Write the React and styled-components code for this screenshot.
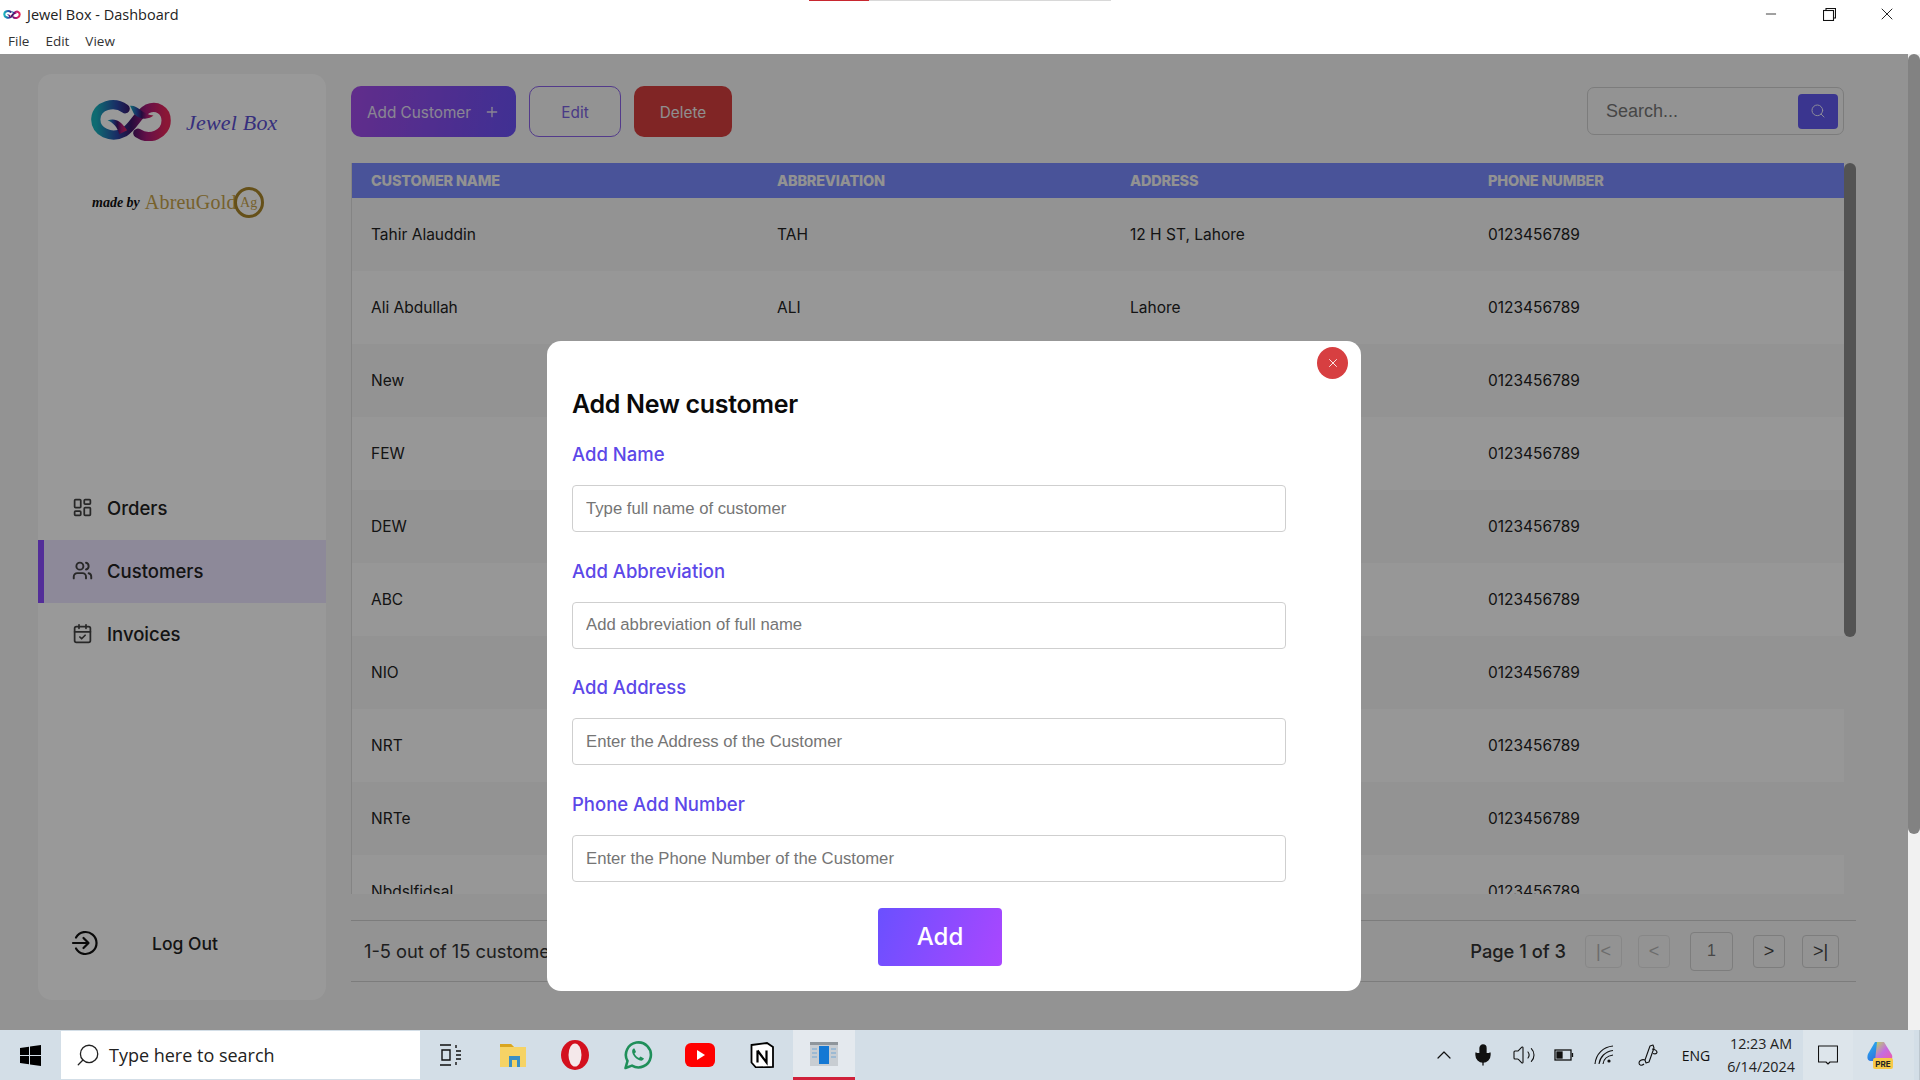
import React from "react";
import styled, { createGlobalStyle } from "styled-components";
import {
  LayoutDashboard,
  Users,
  CalendarCheck,
  Search,
  Plus,
  X,
  Minus,
  ChevronUp,
  Mic,
  Volume2,
} from "lucide-react";

const GlobalStyle = createGlobalStyle`
  html, body { margin: 0; padding: 0; height: 100%; overflow: hidden; }
  body { font-family: "Inter", "Liberation Sans", sans-serif; background: #f1f1f1; }
  * { box-sizing: border-box; }
`;

const Window = styled.div`
  width: 1920px;
  height: 1080px;
  display: flex;
  flex-direction: column;
  position: relative;
`;

/* title bar + menu */
const TitleArea = styled.div`
  height: 54px;
  background: #fff;
  position: relative;
  flex-shrink: 0;
`;

const LoadBar = styled.div`
  position: absolute;
  top: 0;
  left: 809px;
  width: 302px;
  height: 1px;
  background: linear-gradient(90deg, #c8272f 0 60px, #d8d8d8 60px);
`;

const TitleRow = styled.div`
  height: 28px;
  display: flex;
  align-items: center;
  padding-left: 3px;
  font-family: "Open Sans", sans-serif;
  font-size: 14.5px;
  color: #222;
`;

const TitleText = styled.span`
  margin-left: 6px;
`;

const WinButtons = styled.div`
  position: absolute;
  top: 0;
  right: 4px;
  display: flex;
`;

const WinButton = styled.div`
  width: 58px;
  height: 28px;
  display: flex;
  align-items: center;
  justify-content: center;
  color: #111;
`;

const MenuRow = styled.div`
  display: flex;
  gap: 16px;
  padding: 4px 0 0 8px;
  font-family: "Open Sans", sans-serif;
  font-size: 13.5px;
  color: #333;
`;

/* dashboard */
const Stage = styled.div`
  flex: 1;
  display: flex;
  position: relative;
  overflow: hidden;
`;

const Dashboard = styled.div`
  width: 1908px;
  background: #f5f5f5;
  display: flex;
  padding: 20px 0 30px 38px;
  gap: 25px;
`;

const Sidebar = styled.aside`
  width: 288px;
  background: #fff;
  border-radius: 14px;
  display: flex;
  flex-direction: column;
`;

const LogoBlock = styled.div`
  height: 403px;
  padding: 26px 0 0 52px;
`;

const LogoRow = styled.div`
  display: flex;
  align-items: center;
  gap: 14px;
`;

const BrandScript = styled.span`
  font-family: "Liberation Serif", serif;
  font-style: italic;
  font-size: 22px;
  letter-spacing: 0.2px;
  color: #5b4fd0;
  position: relative;
  top: 2px;
`;

const MadeByRow = styled.div`
  display: flex;
  align-items: center;
  gap: 5px;
  margin: 46px 0 0 2px;
`;

const MadeBy = styled.span`
  font-family: "Liberation Serif", serif;
  font-style: italic;
  font-size: 14px;
  font-weight: 700;
  color: #111;
`;

const GoldName = styled.span`
  font-family: "Liberation Serif", serif;
  font-size: 20px;
  color: #c6a24a;
  letter-spacing: 0.2px;
`;

const GoldRing = styled.span`
  width: 30px;
  height: 31px;
  margin-left: -8px;
  border-radius: 50%;
  border: 3px solid #a9852a;
  font-family: "Liberation Serif", serif;
  font-size: 14px;
  color: #c6a24a;
  display: flex;
  align-items: center;
  justify-content: center;
`;

const NavItem = styled.div`
  height: 63px;
  display: flex;
  align-items: center;
  gap: 14px;
  padding: 0 0 2px ${(props) => (props.$active ? "28px" : "34px")};
  font-size: 18.5px;
  font-weight: 500;
  color: #222;
  background: ${(props) => (props.$active ? "#ece4ff" : "transparent")};
  border-left: ${(props) => (props.$active ? "6px solid #8a4cff" : "none")};
  svg {
    color: #444;
  }
`;

const LogoutRow = styled.div`
  margin-top: auto;
  height: 114px;
  display: flex;
  align-items: center;
  gap: 53px;
  padding: 0 0 0 33px;
  font-size: 17.5px;
  font-weight: 500;
  color: #222;
`;

const Content = styled.main`
  width: 1506px;
  display: flex;
  flex-direction: column;
`;

const Toolbar = styled.div`
  height: 89px;
  display: flex;
  gap: 13px;
  padding-top: 12px;
  padding-right: 13px;
  align-items: flex-start;
`;

const ToolButton = styled.div`
  height: 51px;
  display: flex;
  align-items: center;
  justify-content: center;
  gap: 13px;
  width: ${(props) => props.$w}px;
  border-radius: 10px;
  font-size: 15.3px;
  padding-top: 1px;
  color: ${(props) => props.$color};
  background: ${(props) => props.$bg};
  border: ${(props) => props.$border || "none"};
`;

const SearchBox = styled.div`
  margin-left: auto;
  width: 257px;
  height: 48px;
  margin-top: 1px;
  border: 1px solid #cfcfcf;
  border-radius: 7px;
  display: flex;
  align-items: center;
  justify-content: space-between;
  padding: 0 5px 0 18px;
  font-family: "Liberation Sans", sans-serif;
  font-size: 18px;
  color: #757575;
`;

const SearchButton = styled.div`
  width: 40px;
  height: 35px;
  border-radius: 4px;
  background: #6259ef;
  color: #e8e8ff;
  display: flex;
  align-items: center;
  justify-content: center;
`;

const TableArea = styled.div`
  position: relative;
  height: 731px;
`;

const TableWrap = styled.div`
  position: relative;
  height: 731px;
  width: 1493px;
  overflow: hidden;
  border-left: 1px solid #dcdcdc;
`;

const TableHead = styled.div`
  height: 35px;
  background: #7a8aff;
  display: grid;
  grid-template-columns: 406px 353px 358px 1fr;
  align-items: center;
  padding-left: 19px;
  font-size: 14.5px;
  font-weight: 800;
  letter-spacing: -0.2px;
  color: #f3f3f3;
`;

const Row = styled.div`
  height: 73px;
  display: grid;
  grid-template-columns: 406px 353px 358px 1fr;
  align-items: center;
  padding-left: 19px;
  font-size: 15.5px;
  color: #222;
  background: ${(props) => (props.$odd ? "#f6f6f6" : "#fcfcfc")};
`;

const TableScroll = styled.div`
  position: absolute;
  left: 1493px;
  top: 0;
  width: 12px;
  height: 474px;
  border-radius: 6px;
  background: #8a8a8a;
`;

const Footer = styled.div`
  margin-top: 26px;
  width: 1505px;
  height: 62px;
  border-top: 1px solid #cfcfcf;
  border-bottom: 1px solid #cfcfcf;
  display: flex;
  align-items: center;
  justify-content: space-between;
  padding: 0 17px 0 13px;
  font-size: 18.3px;
  color: #333;
`;

const Pager = styled.div`
  display: flex;
  align-items: center;
`;

const PageLabel = styled.span`
  margin-right: 19px;
  font-weight: 500;
`;

const PageButton = styled.div`
  width: ${(props) => props.$w}px;
  height: ${(props) => (props.$tall ? 39 : 33)}px;
  margin-right: ${(props) => props.$mr}px;
  border: 1px solid ${(props) => (props.$off ? "#e2e2e2" : "#d0d0d0")};
  border-radius: 4px;
  display: flex;
  align-items: center;
  justify-content: center;
  font-family: "Liberation Sans", sans-serif;
  font-size: ${(props) => (props.$tall ? 16 : 18)}px;
  color: ${(props) => (props.$off ? "#b4b4b4" : props.$tall ? "#777" : "#444")};
`;

const PageScroll = styled.div`
  width: 12px;
  background: #f1f1f1;
  position: relative;
`;

const PageThumb = styled.div`
  height: 780px;
  border-radius: 6px;
  background: #828282;
`;

const Overlay = styled.div`
  position: absolute;
  top: 0;
  left: 0;
  width: 1908px;
  bottom: 0;
  background: rgba(0, 0, 0, 0.4);
`;

const Modal = styled.div`
  position: absolute;
  left: 547px;
  top: 287px;
  width: 814px;
  height: 650px;
  background: #fff;
  border-radius: 14px;
  padding: 47px 25px 0;
  display: flex;
  flex-direction: column;
`;

const CloseButton = styled.div`
  position: absolute;
  top: 6px;
  right: 13px;
  width: 31px;
  height: 32px;
  border-radius: 50%;
  background: #d73f41;
  color: #fff;
  display: flex;
  align-items: center;
  justify-content: center;
`;

const ModalTitle = styled.h2`
  margin: 0 0 21px;
  font-size: 25px;
  line-height: 32px;
  font-weight: 600;
  letter-spacing: -0.3px;
  color: #0a0a0a;
`;

const FieldLabel = styled.label`
  display: block;
  height: 26px;
  line-height: 26px;
  font-size: 18.5px;
  font-weight: 500;
  color: #5c48e8;
`;

const Field = styled.input`
  display: block;
  width: 714px;
  height: 47px;
  margin: 18px 0 25.7px;
  padding: 0 13px;
  border: 1px solid #cfcfcf;
  border-radius: 4px;
  outline: none;
  font-family: "Liberation Sans", sans-serif;
  font-size: 16.7px;
  &::placeholder {
    color: #757575;
  }
`;

const AddButton = styled.div`
  width: 124px;
  height: 58px;
  margin: 0 0 0 306px;
  border-radius: 4px;
  background: linear-gradient(110deg, #6a50ff, #aa47ff);
  color: #fff;
  font-size: 24px;
  font-weight: 500;
  display: flex;
  align-items: center;
  justify-content: center;
`;

/* taskbar */
const Taskbar = styled.div`
  height: 50px;
  flex-shrink: 0;
  background: #d3dee7;
  display: flex;
  align-items: center;
  position: relative;
`;

const StartSlot = styled.div`
  width: 61px;
  display: flex;
  justify-content: center;
`;

const TaskSearch = styled.div`
  width: 359px;
  height: 48px;
  background: #fff;
  display: flex;
  align-items: center;
  gap: 8px;
  padding-left: 14px;
  font-family: "Open Sans", sans-serif;
  font-size: 18px;
  color: #222;
`;

const GlassIcon = styled(Search)`
  transform: scaleX(-1);
`;

const TaskIcon = styled.div`
  width: 62.2px;
  height: 50px;
  display: flex;
  align-items: center;
  justify-content: center;
  background: ${(props) => (props.$active ? "#e4e9ee" : "transparent")};
  border-bottom: ${(props) => (props.$active ? "3px solid #d0213a" : "none")};
`;

const Tray = styled.div`
  margin-left: auto;
  display: flex;
  align-items: center;
  height: 100%;
  color: #111;
  padding-right: 5px;
  border-right: 1px solid #bcc6ce;
`;

const TraySlot = styled.div`
  width: ${(props) => props.$w || 40}px;
  height: 100%;
  display: flex;
  align-items: center;
  justify-content: center;
  padding-right: ${(props) => props.$pr || 0}px;
  font-family: "Open Sans", sans-serif;
  font-size: 14px;
  background: ${(props) => props.$bg || "transparent"};
`;

const Clock = styled.div`
  width: 84px;
  text-align: center;
  font-family: "Open Sans", sans-serif;
  font-size: 14.3px;
  line-height: 23px;
  color: #222;
`;

function InfinityLogo({ size = 82 }) {
  return (
    <svg width={size} height={size / 2} viewBox="0 0 82 42" fill="none">
      <defs>
        <linearGradient id="inf" x1="0" y1="0" x2="1" y2="0">
          <stop offset="0" stopColor="#18b3bd" />
          <stop offset="0.3" stopColor="#2a4aa8" />
          <stop offset="0.5" stopColor="#3c1466" />
          <stop offset="0.72" stopColor="#a81a78" />
          <stop offset="1" stopColor="#e8265a" />
        </linearGradient>
      </defs>
      <path
        d="M35 9C24 1 6 5 5 19c-1 14 16 21 29 14 10-6 13-18 24-24 9-4 19 1 19 12 0 14-17 21-29 13"
        stroke="url(#inf)"
        strokeWidth="9.500"
        strokeLinecap="round"
      />
      <path d="M17 21c8-3 14 1 20 10l-8 4c-2-7-6-12-12-14z" fill="url(#inf)" />
      <path d="M40 6c8-1 11 8 24 10-4 4-14 5-20-2z" fill="url(#inf)" />
    </svg>
  );
}

function LogoutIcon() {
  return (
    <svg width="28" height="28" viewBox="0 0 28 28" fill="none" stroke="#111" strokeWidth="2.2" strokeLinecap="round" strokeLinejoin="round">
      <path d="M5 8.5A11 11 0 1 1 5 19.5" />
      <path d="M2 14h15M12.5 9l5 5-5 5" />
    </svg>
  );
}

function WindowsLogo() {
  return (
    <svg width="21" height="21" viewBox="0 0 21 21" fill="#000">
      <path d="M0 3l9-1.3V10H0zM10 1.6L21 0v10H10zM0 11h9v8.300L0 18zM10 11h11v10l-11-1.600z" />
    </svg>
  );
}

function TaskViewIcon() {
  return (
    <svg width="24" height="24" viewBox="0 0 24 24" fill="none" stroke="#111" strokeWidth="1.4">
      <path d="M1 2h11M1 22h11M3 7h8v10H3zM17 2v3M17 8h5M17 12h5M17 16h5M17 19v3" />
    </svg>
  );
}

function FolderIcon() {
  return (
    <svg width="28" height="26" viewBox="0 0 28 26">
      <path d="M1 2h11l3 3h12v20H1z" fill="#f6d365" />
      <path d="M1 2h11l3 3H1z" fill="#d9a520" />
      <path d="M10 14h11v11h-3v-7h-5v7h-3z" fill="#3a8fc4" />
    </svg>
  );
}

function OperaIcon() {
  return (
    <svg width="30" height="30" viewBox="0 0 30 30">
      <ellipse cx="15" cy="15" rx="14" ry="15" fill="#d3101e" />
      <ellipse cx="15" cy="15" rx="6.500" ry="11.500" fill="#f4e8ea" />
    </svg>
  );
}

function WhatsAppIcon() {
  return (
    <svg width="30" height="30" viewBox="0 0 30 30" fill="none">
      <path d="M2.500 28l2-7A12.500 12.500 0 1 1 9 25.600z" stroke="#1f8f5a" strokeWidth="2.600" strokeLinejoin="round" />
      <path d="M10.500 8.500c-1.500 1-2 3-.5 6 1.500 3 4 5 7 6 2 .5 3.500-.5 4-2l-3.500-2-1.500 1.500c-2-1-3.500-2.500-4.500-4.500l1.500-1.500-1.500-3.500z" fill="#1f8f5a" />
    </svg>
  );
}

function YoutubeIcon() {
  return (
    <svg width="30" height="24" viewBox="0 0 30 24">
      <rect width="30" height="24" rx="6" fill="#f00" />
      <path d="M12 7l8 5-8 5z" fill="#fff" />
    </svg>
  );
}

function NotionIcon() {
  return (
    <svg width="24" height="26" viewBox="0 0 24 26">
      <path d="M1.500 3L17 1l6 4v20l-17 .5-4.500-5z" fill="#fff" stroke="#000" strokeWidth="1.800" />
      <path d="M7.500 8.500v12M7.500 8.500l9 12v-12" fill="none" stroke="#000" strokeWidth="2.200" />
    </svg>
  );
}

function AppIcon() {
  return (
    <svg width="28" height="24" viewBox="0 0 28 24">
      <rect width="28" height="24" fill="#c8cdd2" />
      <rect y="0" width="28" height="3" fill="#8f969c" />
      <rect x="9" y="4" width="10" height="18" fill="#1478d4" />
      <path d="M2 7h5M2 11h5M2 15h5M21 7h5M21 11h5M21 15h5" stroke="#8fb4d4" strokeWidth="1.500" />
    </svg>
  );
}

function BatteryIcon() {
  return (
    <svg width="20" height="12" viewBox="0 0 20 12" fill="none" stroke="#111" strokeWidth="1.300">
      <rect x="1" y="1" width="16" height="10" />
      <rect x="3" y="3" width="5" height="6" fill="#111" />
      <path d="M18.500 4v4" />
    </svg>
  );
}

function SignalIcon() {
  return (
    <svg width="20" height="20" viewBox="0 0 20 20" fill="none" stroke="#111" strokeWidth="1.100">
      <path d="M1 19C2 9 9 2 19 1M5 19C6 12 11 6.500 19 5.500M9 19c.5-4.500 4-8 10-9" />
      <circle cx="15" cy="16" r="1.600" fill="#111" stroke="none" />
    </svg>
  );
}

function PenIcon() {
  return (
    <svg width="22" height="24" viewBox="0 0 22 24" fill="none" stroke="#111" strokeWidth="1.100" strokeLinejoin="round">
      <path d="M8 17L13 3l3-1 1 3-5 14-3 1z" />
      <path d="M15 6c3 .5 5 2 5 3.500-.5 1.500-2.500 1.500-4 1M8 17c-3-1-6 .5-6 3 0 2.500 3 3 5 1" />
    </svg>
  );
}

function NoticeIcon() {
  return (
    <svg width="20" height="20" viewBox="0 0 20 20" fill="none" stroke="#111" strokeWidth="1.100" strokeLinejoin="round">
      <path d="M.5 1h19v16H12l-2 2-2-2H.5z" />
    </svg>
  );
}

function CopilotIcon() {
  return (
    <svg width="26" height="28" viewBox="0 0 26 28">
      <defs>
        <linearGradient id="copA" x1="0" y1="0" x2="0.6" y2="1">
          <stop offset="0" stopColor="#27b5f0" />
          <stop offset="1" stopColor="#2f6fe0" />
        </linearGradient>
        <linearGradient id="copB" x1="0" y1="0" x2="1" y2="1">
          <stop offset="0" stopColor="#b5dc5a" />
          <stop offset="0.5" stopColor="#c56ce0" />
          <stop offset="1" stopColor="#ef5aa8" />
        </linearGradient>
      </defs>
      <path d="M8 1h6L9 20H3c-3-1-3-4-2-7z" fill="url(#copA)" />
      <path d="M10 1h7l8 13c1 4-1 6-4 6H8z" fill="url(#copB)" />
      <rect x="6" y="17" width="20" height="11" rx="2" fill="#f7c948" />
      <text x="16" y="26" fontSize="8" fontWeight="700" textAnchor="middle" fill="#222" fontFamily="Inter, sans-serif">PRE</text>
    </svg>
  );
}

const customers = [
  ["Tahir Alauddin", "TAH", "12 H ST, Lahore"],
  ["Ali Abdullah", "ALI", "Lahore"],
  ["New", "", ""],
  ["FEW", "", ""],
  ["DEW", "", ""],
  ["ABC", "", ""],
  ["NIO", "", ""],
  ["NRT", "", ""],
  ["NRTe", "", ""],
  ["Nbdslfidsal", "", ""],
];

const fields = [
  ["Add Name", "Type full name of customer"],
  ["Add Abbreviation", "Add abbreviation of full name"],
  ["Add Address", "Enter the Address of the Customer"],
  ["Phone Add Number", "Enter the Phone Number of the Customer"],
];

export default function App() {
  return (
    <Window>
      <GlobalStyle />
      <TitleArea>
        <LoadBar />
        <TitleRow>
          <InfinityLogo size={18} />
          <TitleText>Jewel Box - Dashboard</TitleText>
        </TitleRow>
        <WinButtons>
          <WinButton><Minus size={16} strokeWidth={1.2} /></WinButton>
          <WinButton>
            <svg width="13" height="13" viewBox="0 0 13 13" fill="none" stroke="#111" strokeWidth="1.100">
              <rect x="0.500" y="2.500" width="10" height="10" />
              <path d="M3 2.500V.5h9.500V10h-2" />
            </svg>
          </WinButton>
          <WinButton><X size={20} strokeWidth={1.100} /></WinButton>
        </WinButtons>
        <MenuRow>
          <span>File</span>
          <span>Edit</span>
          <span>View</span>
        </MenuRow>
      </TitleArea>

      <Stage>
        <Dashboard>
          <Sidebar>
            <LogoBlock>
              <LogoRow>
                <InfinityLogo />
                <BrandScript>Jewel Box</BrandScript>
              </LogoRow>
              <MadeByRow>
                <MadeBy>made by</MadeBy>
                <GoldName>AbreuGold</GoldName>
                <GoldRing>Ag</GoldRing>
              </MadeByRow>
            </LogoBlock>
            <NavItem>
              <LayoutDashboard size={21} />
              Orders
            </NavItem>
            <NavItem $active>
              <Users size={21} strokeWidth={2.2} />
              Customers
            </NavItem>
            <NavItem>
              <CalendarCheck size={21} />
              Invoices
            </NavItem>
            <LogoutRow>
              <LogoutIcon />
              Log Out
            </LogoutRow>
          </Sidebar>

          <Content>
            <Toolbar>
              <ToolButton $w={165} $bg="linear-gradient(100deg, #a24be8, #6a50f5)" $color="#e6e0f5">
                Add Customer
                <Plus size={16} />
              </ToolButton>
              <ToolButton $w={92} $bg="transparent" $color="#7a62df" $border="1px solid #8a62e8">
                Edit
              </ToolButton>
              <ToolButton $w={98} $bg="#d63f3f" $color="#eee">
                Delete
              </ToolButton>
              <SearchBox>
                Search...
                <SearchButton>
                  <Search size={16} strokeWidth={1.500} />
                </SearchButton>
              </SearchBox>
            </Toolbar>

            <TableArea>
              <TableWrap>
                <TableHead>
                  <span>CUSTOMER NAME</span>
                  <span>ABBREVIATION</span>
                  <span>ADDRESS</span>
                  <span>PHONE NUMBER</span>
                </TableHead>
                {customers.map((c, i) => (
                  <Row key={c[0]} $odd={i % 2 === 0}>
                    <span>{c[0]}</span>
                    <span>{c[1]}</span>
                    <span>{c[2]}</span>
                    <span>0123456789</span>
                  </Row>
                ))}
              </TableWrap>
              <TableScroll />
            </TableArea>

            <Footer>
              <span>1-5 out of 15 customers</span>
              <Pager>
                <PageLabel>Page 1 of 3</PageLabel>
                <PageButton $w={37} $mr={16} $off>|&lt;</PageButton>
                <PageButton $w={32} $mr={20} $off>&lt;</PageButton>
                <PageButton $w={43} $mr={20} $tall>1</PageButton>
                <PageButton $w={32} $mr={17}>&gt;</PageButton>
                <PageButton $w={37} $mr={0}>&gt;|</PageButton>
              </Pager>
            </Footer>
          </Content>
        </Dashboard>

        <PageScroll>
          <PageThumb />
        </PageScroll>

        <Overlay>
          <Modal>
            <CloseButton><X size={14} strokeWidth={1.500} /></CloseButton>
            <ModalTitle>Add New customer</ModalTitle>
            {fields.map(([label, hint]) => (
              <div key={label}>
                <FieldLabel>{label}</FieldLabel>
                <Field placeholder={hint} />
              </div>
            ))}
            <AddButton>Add</AddButton>
          </Modal>
        </Overlay>
      </Stage>

      <Taskbar>
        <StartSlot><WindowsLogo /></StartSlot>
        <TaskSearch>
          <GlassIcon size={26} strokeWidth={1.200} />
          Type here to search
        </TaskSearch>
        <TaskIcon><TaskViewIcon /></TaskIcon>
        <TaskIcon><FolderIcon /></TaskIcon>
        <TaskIcon><OperaIcon /></TaskIcon>
        <TaskIcon><WhatsAppIcon /></TaskIcon>
        <TaskIcon><YoutubeIcon /></TaskIcon>
        <TaskIcon><NotionIcon /></TaskIcon>
        <TaskIcon $active><AppIcon /></TaskIcon>
        <Tray>
          <TraySlot $w={38}><ChevronUp size={24} strokeWidth={1.200} /></TraySlot>
          <TraySlot><Mic size={24} fill="#111" strokeWidth={1.300} /></TraySlot>
          <TraySlot $w={41}><Volume2 size={24} strokeWidth={1.100} /></TraySlot>
          <TraySlot><BatteryIcon /></TraySlot>
          <TraySlot $w={39}><SignalIcon /></TraySlot>
          <TraySlot $w={50}><PenIcon /></TraySlot>
          <TraySlot $w={46}>ENG</TraySlot>
          <Clock>
            12:23 AM
            <br />
            6/14/2024
          </Clock>
          <TraySlot $w={50} $bg="#dde5eb"><NoticeIcon /></TraySlot>
          <TraySlot $w={61} $pr={8} $bg="#d9e2e9"><CopilotIcon /></TraySlot>
        </Tray>
      </Taskbar>
    </Window>
  );
}
